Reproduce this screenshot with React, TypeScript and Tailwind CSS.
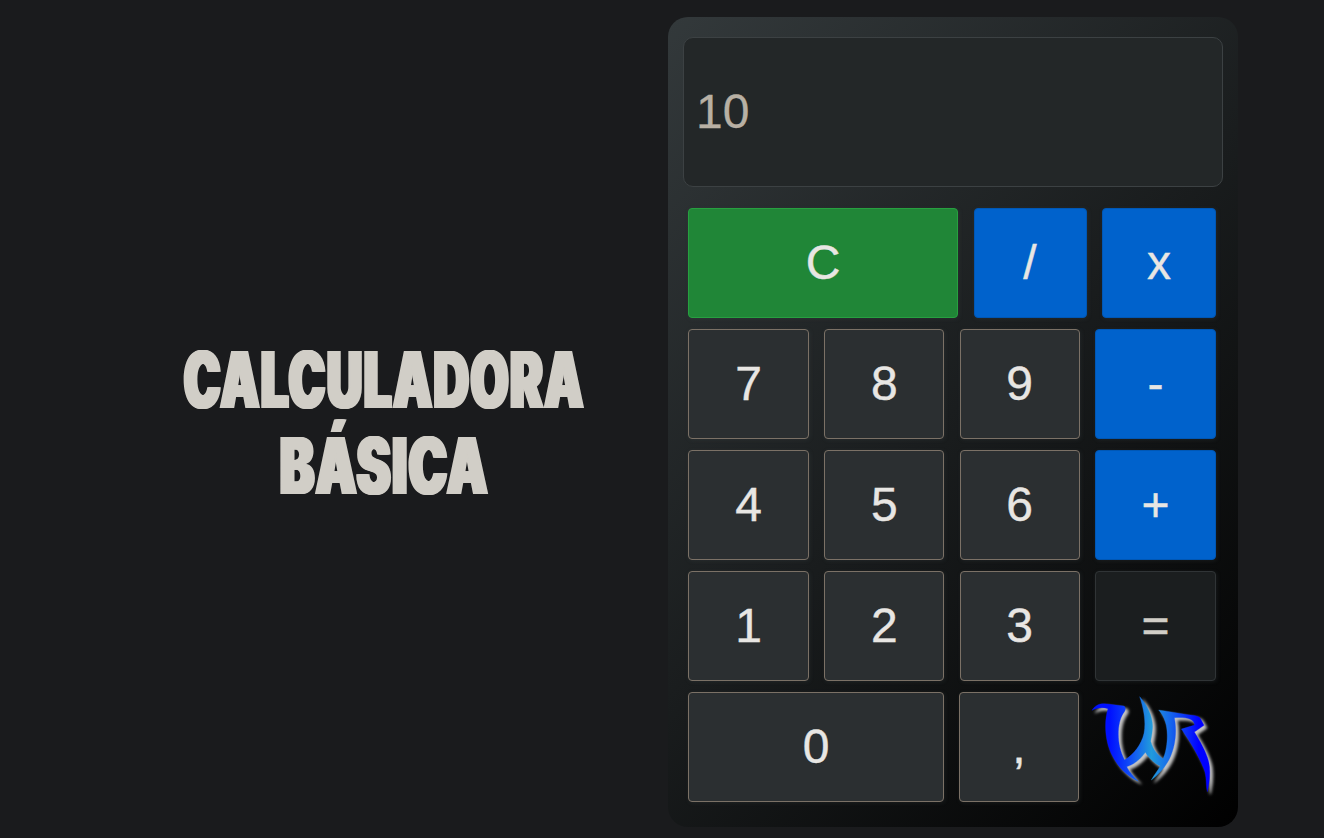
import React from "react";

type Tone = "digit" | "clear" | "op" | "equals";

const tones: Record<Tone, string> = {
  digit: "bg-[#2b2f31] border-[#7b7166] text-[#e8e6e3]",
  clear: "bg-[#208637] border-[#27a040] text-[#e8e6e3]",
  op: "bg-[#0062cc] border-[#0057b5] text-[#e8e6e3]",
  equals: "bg-[#1b1e1f] border-[#303436] text-[#d1cec7]",
};

function Key({ label, tone = "digit", width }: { label: string; tone?: Tone; width: string }) {
  return (
    <button
      className={`${width} ${tones[tone]} flex h-[110px] shrink-0 items-center justify-center rounded-[4px] border pb-px text-[48px] leading-none shadow-[1px_1px_4px_rgba(75,82,85,0.22)] [-webkit-text-stroke:0.4px_currentColor]`}
    >
      {label}
    </button>
  );
}

function Row({ children }: { children: React.ReactNode }) {
  return <div className="flex h-[110px] justify-between">{children}</div>;
}

function Mark() {
  return (
    <path d="M36 76 C48 56 66 53 90 58 L132 63 C139 69 136 77 129 86 C111 115 108 178 134 225 C163 207 184 179 192 145 C199 108 190 66 179 35 C205 63 221 102 217 134 C216 150 213 159 212 169 C219 194 232 210 249 221 C264 190 265 135 256 111 C251 95 244 84 236 75 L324 89 C344 91 357 92 362 102 L372 121 L343 141 C360 168 380 204 386 230 C393 259 388 295 382 320 C377 303 381 272 371 250 C355 211 333 174 304 132 L344 120 C341 99 315 96 283 98 C291 137 287 184 268 222 C254 249 237 267 214 285 C222 270 234 256 241 243 C222 235 207 220 196 202 C183 221 162 239 140 245 C149 263 162 275 175 289 C144 275 116 249 98 214 C75 173 71 112 84 71 C66 65 48 69 36 76 Z" />
  );
}

function Logo() {
  return (
    <svg className="h-[110px] w-[128px] shrink-0" viewBox="24 21 384 330">
      <defs>
        <linearGradient id="ink" gradientUnits="userSpaceOnUse" x1="36" y1="0" x2="392" y2="0">
          <stop offset="0.15" stopColor="#0010ff" />
          <stop offset="0.33" stopColor="#1050f5" />
          <stop offset="0.5" stopColor="#219bdc" />
          <stop offset="0.64" stopColor="#176eea" />
          <stop offset="0.8" stopColor="#0a2cf8" />
          <stop offset="0.9" stopColor="#0000ff" />
        </linearGradient>
        <filter id="glow" x="-20%" y="-20%" width="140%" height="140%">
          <feGaussianBlur stdDeviation="4.5" />
        </filter>
      </defs>
      <g transform="translate(9 8)" fill="#c4c4c4" stroke="#c4c4c4" strokeWidth="2" filter="url(#glow)">
        <Mark />
      </g>
      <g fill="url(#ink)" stroke="url(#ink)" strokeWidth="1">
        <Mark />
      </g>
    </svg>
  );
}

export default function App() {
  return (
    <div className="flex h-[838px] w-[1324px] overflow-hidden bg-[#1a1b1d] pt-[17px] pl-[100px] font-['Liberation_Sans',Arial,sans-serif]">
      <h1 className="flex h-[810px] w-[568px] flex-col items-center justify-center pt-[2px] pl-px text-center font-['Inter',sans-serif] text-[78px] leading-[86px] font-black tracking-[2.5px] text-[#d1cec7] [text-shadow:3px_0_#d1cec7,-3px_0_#d1cec7,1.5px_0_#d1cec7,-1.5px_0_#d1cec7]">
        <span className="block scale-x-[0.628] whitespace-nowrap">CALCULADORA</span>
        <span className="block scale-x-[0.655] whitespace-nowrap">BÁSICA</span>
      </h1>
      <main className="h-[810px] w-[570px] rounded-[20px] bg-[linear-gradient(135deg,#33393b,#000)] px-[15px] pt-5">
        <div className="flex h-[150px] items-center rounded-[10px] border border-[#3c4143] bg-[#232728] px-3 text-[48px] leading-none text-[#b8b0a4] [-webkit-text-stroke:0.3px_currentColor]">
          10
        </div>
        <div className="mt-[21px] flex flex-col gap-[11px] pr-[7px] pl-[5px]">
          <Row>
            <Key label="C" tone="clear" width="w-[270px]" />
            <Key label="/" tone="op" width="w-[113px]" />
            <Key label="x" tone="op" width="w-[114px]" />
          </Row>
          <Row>
            <Key label="7" width="w-[121px]" />
            <Key label="8" width="w-[120px]" />
            <Key label="9" width="w-[120px]" />
            <Key label="-" tone="op" width="w-[121px]" />
          </Row>
          <Row>
            <Key label="4" width="w-[121px]" />
            <Key label="5" width="w-[120px]" />
            <Key label="6" width="w-[120px]" />
            <Key label="+" tone="op" width="w-[121px]" />
          </Row>
          <Row>
            <Key label="1" width="w-[121px]" />
            <Key label="2" width="w-[120px]" />
            <Key label="3" width="w-[120px]" />
            <Key label="=" tone="equals" width="w-[121px]" />
          </Row>
          <div className="flex h-[110px]">
            <Key label="0" width="w-[256px]" />
            <div className="w-[15px] shrink-0" />
            <Key label="," width="w-[120px]" />
            <div className="w-[9px] shrink-0" />
            <Logo />
          </div>
        </div>
      </main>
    </div>
  );
}
